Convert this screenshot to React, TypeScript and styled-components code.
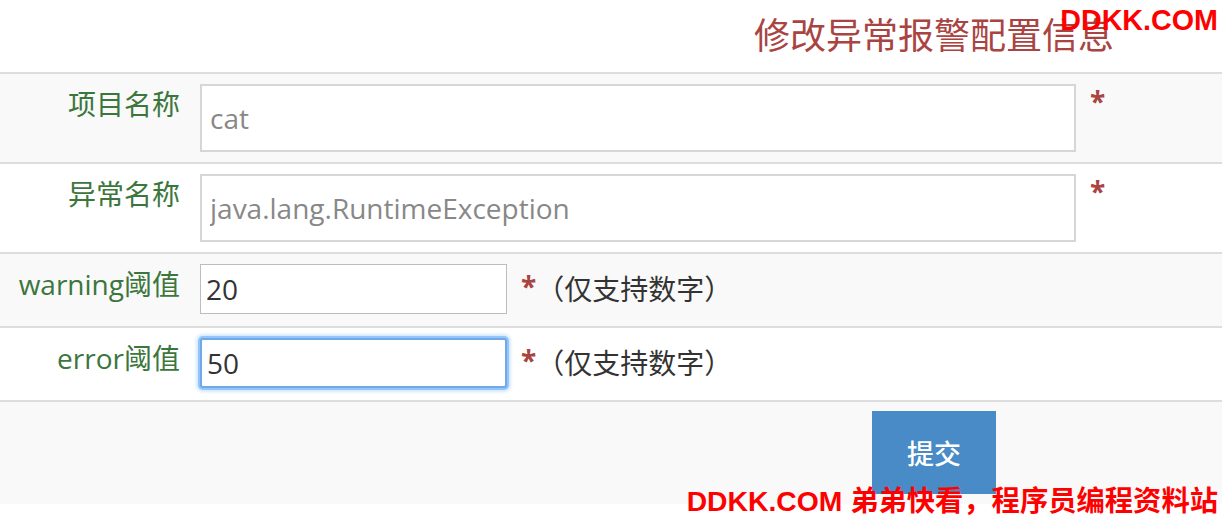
import { FC } from "react";
import styled, { createGlobalStyle } from "styled-components";

const GlobalStyle = createGlobalStyle`
  html, body {
    margin: 0;
    padding: 0;
    background: #ffffff;
  }
  body {
    font-family: "Open Sans", "Noto Sans CJK SC", sans-serif;
  }
`;

const Page = styled.div`
  position: relative;
  width: 1222px;
  height: 518px;
  overflow: hidden;
  background: #ffffff;
`;

// Heading above the form
const Title = styled.h2`
  margin: 0;
  height: 72px;
  box-sizing: border-box;
  display: flex;
  align-items: center;
  justify-content: flex-end;
  padding: 0 108px 6px 0;
  font-family: "Noto Sans CJK SC", sans-serif;
  font-weight: 400;
  font-size: 36px;
  color: #a94442;
`;

const Row = styled.div<{ $striped?: boolean }>`
  display: grid;
  grid-template-columns: 190px 1fr;
  border-top: 2px solid #dddddd;
  background: ${(p) => (p.$striped ? "#f9f9f9" : "#ffffff")};
`;

const Label = styled.div`
  padding: 10px 10px 0 0;
  text-align: right;
  font-size: 28px;
  line-height: 40px;
  color: #3c763d;
`;

const Field = styled.div<{ $pad?: number }>`
  display: flex;
  align-items: flex-start;
  padding: 10px 0 ${(p) => p.$pad ?? 10}px 10px;
`;

const TextInput = styled.input<{ $wide?: boolean; $focus?: boolean }>`
  box-sizing: border-box;
  width: ${(p) => (p.$wide ? "876px" : "307px")};
  height: ${(p) => (p.$wide ? "68px" : "50px")};
  margin: 0;
  padding: 0 ${(p) => (p.$wide ? "8px" : "5px")};
  font-family: "Open Sans", sans-serif;
  font-size: 28px;
  color: ${(p) => (p.$wide ? "#888888" : "#333333")};
  background: #ffffff;
  border: ${(p) =>
    p.$focus
      ? "2px solid #6fa9ea"
      : p.$wide
      ? "2px solid #d6d6d6"
      : "1px solid #bdbdbd"};
  box-shadow: ${(p) =>
    p.$focus
      ? "0 0 0 2px rgba(135, 190, 250, 0.85), 0 0 3px 4px rgba(160, 205, 250, 0.45)"
      : "none"};
  outline: none;
  border-radius: ${(p) => (p.$focus ? "3px" : "0")};
`;

const Required = styled.span<{ $lh: number }>`
  margin-left: 14px;
  font-size: 28px;
  font-weight: 700;
  line-height: ${(p) => p.$lh}px;
  color: #a94442;
`;

const Hint = styled.span`
  font-family: "Open Sans", "Noto Sans CJK SC", sans-serif;
  font-size: 28px;
  line-height: 50px;
  color: #333333;
`;

const ActionRow = styled.div`
  border-top: 2px solid #dddddd;
  background: #f9f9f9;
  height: 93px;
  padding: 9px 0 0 872px;
`;

const SubmitButton = styled.button`
  width: 124px;
  height: 83px;
  border: none;
  background: #488bc7;
  color: #ffffff;
  font-family: "Noto Sans CJK SC", sans-serif;
  font-size: 27px;
  font-weight: 500;
  cursor: pointer;
`;

// Site watermarks lying over the page
const Mark = styled.div<{ $bottom?: boolean }>`
  position: absolute;
  right: 4px;
  ${(p) => (p.$bottom ? "bottom: 0;" : "top: 3px;")}
  font-family: "Liberation Sans", "Noto Sans CJK SC", sans-serif;
  font-weight: 700;
  font-size: ${(p) => (p.$bottom ? "28.3px" : "28.7px")};
  line-height: 34px;
  color: #ff0000;
  white-space: nowrap;
`;

const App: FC = () => {
  return (
    <Page>
      <GlobalStyle />
      <Title>修改异常报警配置信息</Title>
      <Row $striped>
        <Label>项目名称</Label>
        <Field>
          <TextInput $wide readOnly value="cat" />
          <Required $lh={34}>*</Required>
        </Field>
      </Row>
      <Row>
        <Label>异常名称</Label>
        <Field>
          <TextInput $wide readOnly value="java.lang.RuntimeException" />
          <Required $lh={34}>*</Required>
        </Field>
      </Row>
      <Row $striped>
        <Label>warning阈值</Label>
        <Field $pad={12}>
          <TextInput defaultValue="20" />
          <Required $lh={44}>*</Required>
          <Hint>（仅支持数字）</Hint>
        </Field>
      </Row>
      <Row>
        <Label>error阈值</Label>
        <Field $pad={12}>
          <TextInput $focus defaultValue="50" />
          <Required $lh={44}>*</Required>
          <Hint>（仅支持数字）</Hint>
        </Field>
      </Row>
      <ActionRow>
        <SubmitButton>提交</SubmitButton>
      </ActionRow>
      <Mark>DDKK.COM</Mark>
      <Mark $bottom>DDKK.COM 弟弟快看，程序员编程资料站</Mark>
    </Page>
  );
};

export default App;
